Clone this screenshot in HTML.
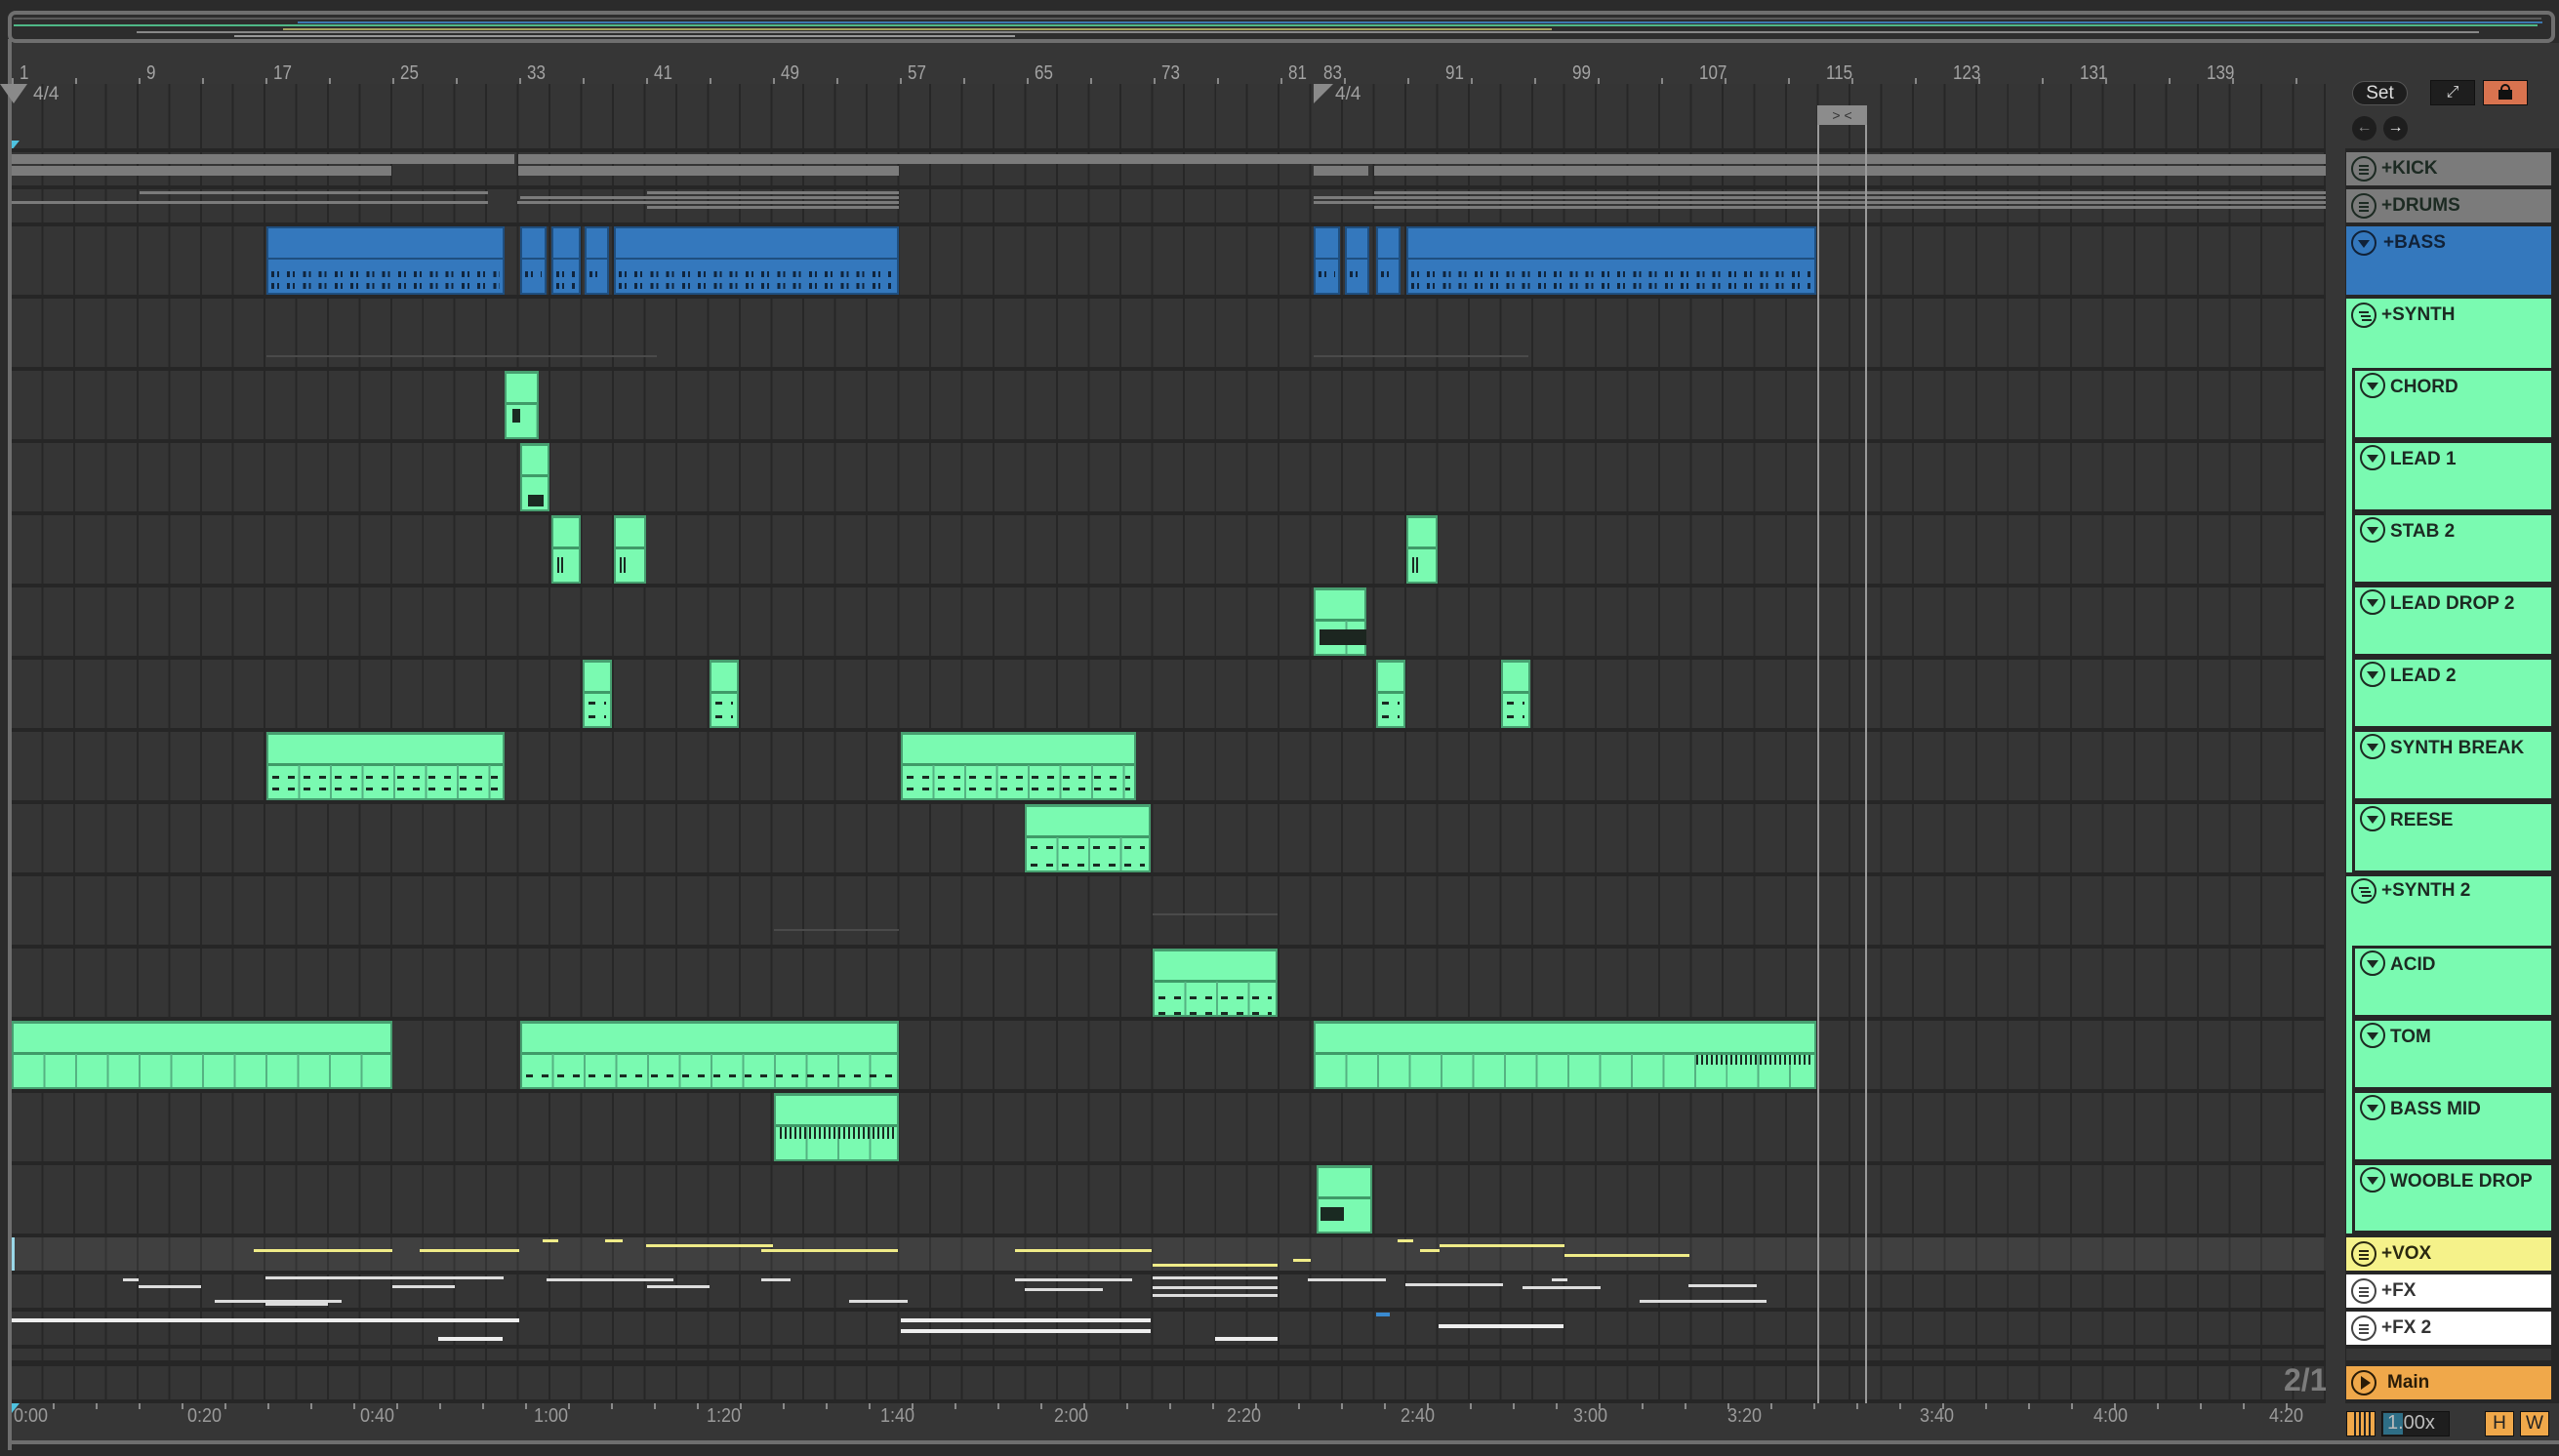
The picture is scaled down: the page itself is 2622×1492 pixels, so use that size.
<!DOCTYPE html>
<html><head><meta charset="utf-8"><style>
*{margin:0;padding:0;box-sizing:border-box}
body{width:2622px;height:1492px;background:#2b2b2b;position:relative;overflow:hidden;font-family:"Liberation Sans",sans-serif}
.a{position:absolute}
.grid{position:absolute;left:12px;width:2371px;background-color:#353535;background-image:repeating-linear-gradient(90deg,transparent 0 30.5px,#272727 30.5px 32.48px)}
.sep{position:absolute;left:12px;width:2371px;background:#262626}
.g{position:absolute;background:#7afab1;border:2px solid #479f70;border-top-width:3px}
.g .h{position:absolute;left:0;right:0;top:44%;height:3px;background:#3f9a68}
.g .v{position:absolute;left:0;right:0;top:47%;bottom:0;background-image:repeating-linear-gradient(90deg,transparent 0 30.5px,#55b282 30.5px 32.48px)}
.g .n{position:absolute;left:4px;right:4px;height:3px;background-image:repeating-linear-gradient(90deg,#1a2a22 0 7px,transparent 7px 16px)}
.b{position:absolute;background:#3478bd;border:2px solid #1f4f80}
.b .h{position:absolute;left:0;right:0;top:46%;height:2px;background:#1f4f80}
.b .n{position:absolute;left:3px;right:3px;height:6px;background-image:repeating-linear-gradient(90deg,#10253d 0 3px,transparent 3px 6px,#10253d 6px 8px,transparent 8px 16.24px)}
.gr{position:absolute;background:#7b7b7b;height:10px}
.ln{position:absolute;height:3px}
.lab{position:absolute;left:2404px;width:210px;font-weight:bold;font-size:19px;color:#1c2a22}
.ic{position:absolute;width:26px;height:26px;border:2px solid #1c2a22;border-radius:50%}
.ic i{position:absolute;left:6px;width:10px;height:2px;background:#1c2a22}
.ic .t{position:absolute;left:5px;top:8px;width:0;height:0;border-left:6px solid transparent;border-right:6px solid transparent;border-top:8px solid #1c2a22}
.txt{position:absolute;top:6px}
.ch{position:absolute;left:2410px;width:204px;height:74px;border:3px solid #262626;background:#7afab1;border-right:none}
.rn{position:absolute;top:64px;font-size:20px;color:#a3a3a3;transform:scaleX(.85);transform-origin:left}
.tk{position:absolute;width:2px;background:#8a8a8a}
.tn{position:absolute;top:1440px;font-size:20px;color:#9a9a9a;transform:scaleX(.9);transform-origin:left}
</style></head><body>

<!-- overview -->
<div class="a" style="left:8px;top:11px;width:2610px;height:33px;border:4px solid #6f6f6f;border-radius:8px;background:#2d2d2d"></div>
<div class="a" style="left:14px;top:25px;width:1250px;height:2px;background:#4fb887"></div>
<div class="a" style="left:305px;top:22px;width:2300px;height:2px;background:#3c78b0"></div>
<div class="a" style="left:600px;top:25px;width:2000px;height:2px;background:#4fb887"></div>
<div class="a" style="left:290px;top:29px;width:1300px;height:2px;background:#a5a160"></div>
<div class="a" style="left:140px;top:32px;width:2400px;height:2px;background:#888"></div>
<div class="a" style="left:240px;top:36px;width:800px;height:2px;background:#999"></div>
<div class="a" style="left:14px;top:18px;width:2590px;height:2px;background:#5a5a5a"></div>

<!-- left border line -->
<div class="a" style="left:8px;top:40px;width:4px;height:1446px;background:#6e6e6e"></div>
<div class="a" style="left:8px;top:1476px;width:2614px;height:4px;background:#6e6e6e;border-radius:0 0 0 6px"></div>

<!-- ruler -->
<div class="a" style="left:12px;top:44px;width:2391px;height:42px;background:#363636"></div>
<div class="rn" style="left:20px">1</div><div class="rn" style="left:150px">9</div><div class="rn" style="left:280px">17</div><div class="rn" style="left:410px">25</div><div class="rn" style="left:540px">33</div><div class="rn" style="left:670px">41</div><div class="rn" style="left:800px">49</div><div class="rn" style="left:930px">57</div><div class="rn" style="left:1060px">65</div><div class="rn" style="left:1190px">73</div><div class="rn" style="left:1320px">81</div><div class="rn" style="left:1356px">83</div><div class="rn" style="left:1481px">91</div><div class="rn" style="left:1611px">99</div><div class="rn" style="left:1741px">107</div><div class="rn" style="left:1871px">115</div><div class="rn" style="left:2001px">123</div><div class="rn" style="left:2131px">131</div><div class="rn" style="left:2261px">139</div>
<div class="a" style="left:12px;top:80px;width:2371px;height:6px;background-image:repeating-linear-gradient(90deg,#888 0 2px,transparent 2px 65px)"></div>

<!-- grid -->
<div class="grid" style="top:86px;height:1348px"></div>
<div class="a" style="left:14px;top:86px;width:0;height:0;border-left:14px solid transparent;border-right:14px solid transparent;border-top:20px solid #8a8a8a;transform:translateX(-14px)"></div>
<div class="a" style="left:34px;top:86px;font-size:19px;color:#a0a0a0">4/4</div>
<div class="a" style="left:1346px;top:86px;width:0;height:0;border-right:20px solid transparent;border-top:20px solid #8a8a8a"></div>
<div class="a" style="left:1368px;top:86px;font-size:19px;color:#a0a0a0">4/4</div>
<div class="a" style="left:12px;top:144px;width:0;height:0;border-right:8px solid transparent;border-top:10px solid #4fc3e0"></div>

<!-- separators -->
<div class="sep" style="top:152px;height:4px"></div>
<div class="sep" style="top:190px;height:4px"></div>
<div class="sep" style="top:228px;height:4px"></div>
<div class="sep" style="top:302px;height:4px"></div>
<div class="sep" style="top:376px;height:4px"></div><div class="sep" style="top:450px;height:4px"></div><div class="sep" style="top:524px;height:4px"></div><div class="sep" style="top:598px;height:4px"></div><div class="sep" style="top:672px;height:4px"></div><div class="sep" style="top:746px;height:4px"></div><div class="sep" style="top:820px;height:4px"></div><div class="sep" style="top:894px;height:4px"></div><div class="sep" style="top:968px;height:4px"></div><div class="sep" style="top:1042px;height:4px"></div><div class="sep" style="top:1116px;height:4px"></div><div class="sep" style="top:1190px;height:4px"></div>
<div class="sep" style="top:1264px;height:4px"></div>
<div class="a" style="left:12px;top:1268px;width:2371px;height:34px;background:rgba(255,255,255,.06)"></div>
<div class="a" style="left:12px;top:1268px;width:3px;height:34px;background:#9ad8e8"></div>
<div class="sep" style="top:1302px;height:4px"></div>
<div class="sep" style="top:1340px;height:4px"></div>
<div class="sep" style="top:1378px;height:4px"></div>
<div class="sep" style="top:1394px;height:6px"></div>
<div class="sep" style="top:1434px;height:4px"></div>

<!-- KICK -->
<div class="gr" style="left:12px;top:158px;width:515px"></div>
<div class="gr" style="left:531px;top:158px;width:1852px"></div>
<div class="gr" style="left:12px;top:170px;width:389px"></div>
<div class="gr" style="left:531px;top:170px;width:390px"></div>
<div class="gr" style="left:1346px;top:170px;width:56px"></div>
<div class="gr" style="left:1408px;top:170px;width:975px"></div>
<!-- DRUMS -->
<div class="ln" style="left:143px;top:196px;width:357px;background:#7b7b7b"></div>
<div class="ln" style="left:12px;top:206px;width:488px;background:#7b7b7b"></div>
<div class="ln" style="left:663px;top:196px;width:258px;background:#7b7b7b"></div>
<div class="ln" style="left:533px;top:201px;width:388px;background:#7b7b7b"></div>
<div class="ln" style="left:530px;top:206px;width:391px;background:#7b7b7b"></div>
<div class="ln" style="left:663px;top:211px;width:258px;background:#7b7b7b"></div>
<div class="ln" style="left:1346px;top:201px;width:1037px;background:#7b7b7b"></div>
<div class="ln" style="left:1346px;top:206px;width:1037px;background:#7b7b7b"></div>
<div class="ln" style="left:1408px;top:196px;width:975px;background:#7b7b7b"></div>
<div class="ln" style="left:1408px;top:211px;width:975px;background:#7b7b7b"></div>

<!-- BASS -->
<div class="b" style="left:273px;top:232px;width:244px;height:70px"><div class="h"></div><div class="n" style="top:44px"></div><div class="n" style="top:56px"></div></div>
<div class="b" style="left:533px;top:232px;width:27px;height:70px"><div class="h"></div><div class="n" style="top:44px"></div></div>
<div class="b" style="left:565px;top:232px;width:30px;height:70px"><div class="h"></div><div class="n" style="top:44px"></div><div class="n" style="top:56px"></div></div>
<div class="b" style="left:599px;top:232px;width:25px;height:70px"><div class="h"></div><div class="n" style="top:44px"></div></div>
<div class="b" style="left:629px;top:232px;width:292px;height:70px"><div class="h"></div><div class="n" style="top:44px"></div><div class="n" style="top:56px"></div></div>
<div class="b" style="left:1346px;top:232px;width:27px;height:70px"><div class="h"></div><div class="n" style="top:44px"></div></div>
<div class="b" style="left:1378px;top:232px;width:25px;height:70px"><div class="h"></div><div class="n" style="top:44px"></div></div>
<div class="b" style="left:1410px;top:232px;width:25px;height:70px"><div class="h"></div><div class="n" style="top:44px"></div></div>
<div class="b" style="left:1441px;top:232px;width:420px;height:70px"><div class="h"></div><div class="n" style="top:44px"></div><div class="n" style="top:56px"></div></div>

<!-- green clips -->
<div class="g" style="left:517px;top:380px;width:35px;height:70px"><div class="h"></div><div class="v"></div><div class="a" style="left:6px;top:36px;width:8px;height:14px;background:#1a2a22"></div></div>
<div class="g" style="left:533px;top:454px;width:30px;height:70px"><div class="h"></div><div class="a" style="left:6px;top:50px;width:16px;height:12px;background:#1a2a22"></div></div>
<div class="g" style="left:565px;top:528px;width:30px;height:70px"><div class="h"></div><div class="a" style="left:4px;top:40px;width:8px;height:16px;background:repeating-linear-gradient(90deg,#1a2a22 0 2px,transparent 2px 4px)"></div></div>
<div class="g" style="left:629px;top:528px;width:33px;height:70px"><div class="h"></div><div class="a" style="left:4px;top:40px;width:8px;height:16px;background:repeating-linear-gradient(90deg,#1a2a22 0 2px,transparent 2px 4px)"></div></div>
<div class="g" style="left:1441px;top:528px;width:32px;height:70px"><div class="h"></div><div class="a" style="left:4px;top:40px;width:8px;height:16px;background:repeating-linear-gradient(90deg,#1a2a22 0 2px,transparent 2px 4px)"></div></div>
<div class="g" style="left:1346px;top:602px;width:54px;height:70px"><div class="h"></div><div class="v"></div><div class="a" style="left:4px;top:40px;width:48px;height:16px;background:#1c2620"></div></div>
<div class="g" style="left:597px;top:676px;width:30px;height:70px"><div class="h"></div><div class="n" style="top:40px"></div><div class="n" style="top:54px"></div></div>
<div class="g" style="left:727px;top:676px;width:30px;height:70px"><div class="h"></div><div class="n" style="top:40px"></div><div class="n" style="top:54px"></div></div>
<div class="g" style="left:1410px;top:676px;width:30px;height:70px"><div class="h"></div><div class="n" style="top:40px"></div><div class="n" style="top:54px"></div></div>
<div class="g" style="left:1538px;top:676px;width:30px;height:70px"><div class="h"></div><div class="n" style="top:40px"></div><div class="n" style="top:54px"></div></div>
<div class="g" style="left:273px;top:750px;width:244px;height:70px"><div class="h"></div><div class="v"></div><div class="n" style="top:42px"></div><div class="n" style="top:54px"></div></div>
<div class="g" style="left:923px;top:750px;width:241px;height:70px"><div class="h"></div><div class="v"></div><div class="n" style="top:42px"></div><div class="n" style="top:54px"></div></div>
<div class="g" style="left:1050px;top:824px;width:129px;height:70px"><div class="h"></div><div class="v"></div><div class="n" style="top:40px"></div><div class="n" style="top:58px"></div></div>
<div class="g" style="left:1181px;top:972px;width:128px;height:70px"><div class="h"></div><div class="v"></div><div class="n" style="top:46px"></div><div class="n" style="top:62px"></div></div>
<div class="g" style="left:12px;top:1046px;width:390px;height:70px"><div class="h"></div><div class="v"></div></div>
<div class="g" style="left:533px;top:1046px;width:388px;height:70px"><div class="h"></div><div class="v"></div><div class="n" style="top:52px"></div></div>
<div class="g" style="left:1346px;top:1046px;width:515px;height:70px"><div class="h"></div><div class="v"></div><div class="a" style="left:390px;top:32px;width:120px;height:10px;background:repeating-linear-gradient(90deg,#1a2a22 0 2px,transparent 2px 5px)"></div></div>
<div class="g" style="left:793px;top:1120px;width:128px;height:70px"><div class="h"></div><div class="v"></div><div class="a" style="left:4px;top:32px;width:118px;height:12px;background:repeating-linear-gradient(90deg,#1a2a22 0 2px,transparent 2px 5px)"></div></div>
<div class="g" style="left:1349px;top:1194px;width:57px;height:70px"><div class="h"></div><div class="a" style="left:2px;top:40px;width:24px;height:14px;background:#1a2a22"></div></div>

<!-- thin lines SYNTH / SYNTH2 -->
<div class="ln" style="left:273px;top:364px;width:400px;height:2px;background:#4a4a4a"></div>
<div class="ln" style="left:1346px;top:364px;width:220px;height:2px;background:#4a4a4a"></div>
<div class="ln" style="left:1181px;top:936px;width:128px;height:2px;background:#4a4a4a"></div>
<div class="ln" style="left:793px;top:952px;width:128px;height:2px;background:#4a4a4a"></div>

<!-- VOX lines -->
<div class="ln" style="left:260px;top:1280px;width:142px;background:#f0ec88"></div>
<div class="ln" style="left:430px;top:1280px;width:102px;background:#f0ec88"></div>
<div class="ln" style="left:556px;top:1270px;width:16px;background:#f0ec88"></div>
<div class="ln" style="left:620px;top:1270px;width:18px;background:#f0ec88"></div>
<div class="ln" style="left:662px;top:1275px;width:130px;background:#f0ec88"></div>
<div class="ln" style="left:780px;top:1280px;width:140px;background:#f0ec88"></div>
<div class="ln" style="left:1040px;top:1280px;width:140px;background:#f0ec88"></div>
<div class="ln" style="left:1181px;top:1295px;width:128px;background:#f0ec88"></div>
<div class="ln" style="left:1325px;top:1290px;width:18px;background:#f0ec88"></div>
<div class="ln" style="left:1432px;top:1270px;width:16px;background:#f0ec88"></div>
<div class="ln" style="left:1455px;top:1280px;width:20px;background:#f0ec88"></div>
<div class="ln" style="left:1475px;top:1275px;width:128px;background:#f0ec88"></div>
<div class="ln" style="left:1603px;top:1285px;width:128px;background:#f0ec88"></div>
<!-- FX lines -->
<div class="ln" style="left:126px;top:1310px;width:16px;background:#ddd"></div>
<div class="ln" style="left:142px;top:1317px;width:64px;background:#ddd"></div>
<div class="ln" style="left:272px;top:1308px;width:244px;background:#ddd"></div>
<div class="ln" style="left:402px;top:1317px;width:64px;background:#ddd"></div>
<div class="ln" style="left:220px;top:1332px;width:130px;background:#ddd"></div>
<div class="ln" style="left:272px;top:1335px;width:64px;background:#ddd"></div>
<div class="ln" style="left:560px;top:1310px;width:130px;background:#ddd"></div>
<div class="ln" style="left:663px;top:1317px;width:64px;background:#ddd"></div>
<div class="ln" style="left:780px;top:1310px;width:30px;background:#ddd"></div>
<div class="ln" style="left:870px;top:1332px;width:60px;background:#ddd"></div>
<div class="ln" style="left:1040px;top:1310px;width:120px;background:#ddd"></div>
<div class="ln" style="left:1050px;top:1320px;width:80px;background:#ddd"></div>
<div class="ln" style="left:1181px;top:1308px;width:128px;background:#ddd"></div>
<div class="ln" style="left:1181px;top:1318px;width:128px;background:#ddd"></div>
<div class="ln" style="left:1181px;top:1326px;width:128px;background:#ddd"></div>
<div class="ln" style="left:1340px;top:1310px;width:80px;background:#ddd"></div>
<div class="ln" style="left:1440px;top:1315px;width:100px;background:#ddd"></div>
<div class="ln" style="left:1560px;top:1318px;width:80px;background:#ddd"></div>
<div class="ln" style="left:1680px;top:1332px;width:130px;background:#ddd"></div>
<div class="ln" style="left:1730px;top:1316px;width:70px;background:#ddd"></div>
<div class="ln" style="left:1590px;top:1310px;width:16px;background:#ddd"></div>
<!-- FX2 lines -->
<div class="ln" style="left:12px;top:1351px;width:520px;height:4px;background:#eee"></div>
<div class="ln" style="left:449px;top:1370px;width:66px;height:4px;background:#eee"></div>
<div class="ln" style="left:923px;top:1351px;width:256px;height:4px;background:#eee"></div>
<div class="ln" style="left:923px;top:1362px;width:256px;height:4px;background:#eee"></div>
<div class="ln" style="left:1245px;top:1370px;width:64px;height:4px;background:#eee"></div>
<div class="ln" style="left:1410px;top:1345px;width:14px;height:4px;background:#3a8ad0"></div>
<div class="ln" style="left:1474px;top:1357px;width:128px;height:4px;background:#eee"></div>

<!-- loop markers -->
<div class="a" style="left:1862px;top:108px;width:2px;height:1330px;background:#9a9a9a"></div>
<div class="a" style="left:1911px;top:108px;width:2px;height:1330px;background:#9a9a9a"></div>
<div class="a" style="left:1862px;top:108px;width:51px;height:20px;background:#8c8c8c;color:#333;font-size:14px;line-height:20px;text-align:center">&gt; &lt;</div>

<div class="a" style="left:2340px;top:1396px;font-size:32px;font-weight:bold;color:#7c7c7c">2/1</div>

<!-- bottom time ruler -->
<div class="a" style="left:12px;top:1438px;width:2391px;height:38px;background:#363636"></div>
<div class="a" style="left:12px;top:1438px;width:2371px;height:6px;background-image:repeating-linear-gradient(90deg,transparent 0 42px,#8a8a8a 42px 44px)"></div>
<div class="tn" style="left:14px">0:00</div><div class="tn" style="left:192px">0:20</div><div class="tn" style="left:369px">0:40</div><div class="tn" style="left:547px">1:00</div><div class="tn" style="left:724px">1:20</div><div class="tn" style="left:902px">1:40</div><div class="tn" style="left:1080px">2:00</div><div class="tn" style="left:1257px">2:20</div><div class="tn" style="left:1435px">2:40</div><div class="tn" style="left:1612px">3:00</div><div class="tn" style="left:1770px">3:20</div><div class="tn" style="left:1967px">3:40</div><div class="tn" style="left:2145px">4:00</div><div class="tn" style="left:2325px">4:20</div>
<div class="a" style="left:12px;top:1438px;width:0;height:0;border-right:8px solid transparent;border-top:10px solid #4fc3e0"></div>

<!-- right panel -->
<div class="a" style="left:2383px;top:44px;width:239px;height:1432px;background:#363636"></div>
<div class="a" style="left:2403px;top:152px;width:219px;height:1286px;background:#262626"></div>
<div class="a" style="left:2410px;top:83px;width:57px;height:25px;border-radius:13px;background:#1e1e1e;border:1px solid #555;color:#ddd;font-size:19px;text-align:center;line-height:23px">Set</div>
<div class="a" style="left:2490px;top:82px;width:46px;height:26px;background:#1e1e1e;border:1px solid #111;color:#ddd;font-size:16px;text-align:center;line-height:24px">⤢</div>
<div class="a" style="left:2544px;top:82px;width:46px;height:26px;background:#d9734f;border:1px solid #111"><div class="a" style="left:15px;top:9px;width:14px;height:10px;background:#111"></div><div class="a" style="left:17px;top:3px;width:10px;height:9px;border:2px solid #111;border-bottom:none;border-radius:5px 5px 0 0"></div></div>
<div class="a" style="left:2410px;top:119px;width:25px;height:25px;border-radius:50%;background:#1e1e1e;color:#888;font-size:16px;text-align:center;line-height:24px">←</div>
<div class="a" style="left:2442px;top:119px;width:25px;height:25px;border-radius:50%;background:#1e1e1e;color:#eee;font-size:16px;text-align:center;line-height:24px">→</div>

<div class="lab" style="top:156px;height:34px;background:#7b7b7b"><div class="ic" style="left:5px;top:4px"><i style="top:7px"></i><i style="top:11px"></i><i style="top:15px"></i></div><span class="txt" style="left:36px">+KICK</span></div>
<div class="lab" style="top:194px;height:34px;background:#7b7b7b"><div class="ic" style="left:5px;top:4px"><i style="top:7px"></i><i style="top:11px"></i><i style="top:15px"></i></div><span class="txt" style="left:36px">+DRUMS</span></div>
<div class="lab" style="top:232px;height:70px;background:#3478bd;color:#112238"><div class="ic" style="left:5px;top:4px;border-color:#112238"><div class="t" style="border-top-color:#112238"></div></div><span class="txt" style="left:38px">+BASS</span></div>
<div class="lab" style="top:306px;height:958px;background:#7afab1"><div class="ic" style="left:5px;top:4px"><i style="top:7px"></i><i style="top:11px;left:8px"></i><i style="top:15px;left:9px"></i></div><span class="txt" style="left:36px">+SYNTH</span></div>
<div class="ch" style="top:377px"></div>
<div class="ch" style="top:451px"></div>
<div class="ch" style="top:525px"></div>
<div class="ch" style="top:599px"></div>
<div class="ch" style="top:673px"></div>
<div class="ch" style="top:747px"></div>
<div class="ch" style="top:821px"></div>
<div class="a" style="left:2404px;top:894px;width:210px;height:4px;background:#262626"></div>
<div class="lab" style="top:898px;height:70px;background:#7afab1"><div class="ic" style="left:5px;top:2px"><i style="top:7px"></i><i style="top:11px;left:8px"></i><i style="top:15px;left:9px"></i></div><span class="txt" style="left:36px;top:4px">+SYNTH 2</span></div>
<div class="ch" style="top:969px"></div>
<div class="ch" style="top:1043px"></div>
<div class="ch" style="top:1117px"></div>
<div class="ch" style="top:1191px;height:73px"></div>

<div class="lab" style="top:379px;left:2413px;width:200px;height:30px;background:none"><div class="ic" style="left:5px;top:3px"><div class="t"></div></div><span class="txt" style="left:36px;top:7px">CHORD</span></div>
<div class="lab" style="top:453px;left:2413px;width:200px;height:30px"><div class="ic" style="left:5px;top:3px"><div class="t"></div></div><span class="txt" style="left:36px;top:7px">LEAD 1</span></div>
<div class="lab" style="top:527px;left:2413px;width:200px;height:30px"><div class="ic" style="left:5px;top:3px"><div class="t"></div></div><span class="txt" style="left:36px;top:7px">STAB 2</span></div>
<div class="lab" style="top:601px;left:2413px;width:200px;height:30px"><div class="ic" style="left:5px;top:3px"><div class="t"></div></div><span class="txt" style="left:36px;top:7px">LEAD DROP 2</span></div>
<div class="lab" style="top:675px;left:2413px;width:200px;height:30px"><div class="ic" style="left:5px;top:3px"><div class="t"></div></div><span class="txt" style="left:36px;top:7px">LEAD 2</span></div>
<div class="lab" style="top:749px;left:2413px;width:200px;height:30px"><div class="ic" style="left:5px;top:3px"><div class="t"></div></div><span class="txt" style="left:36px;top:7px">SYNTH BREAK</span></div>
<div class="lab" style="top:823px;left:2413px;width:200px;height:30px"><div class="ic" style="left:5px;top:3px"><div class="t"></div></div><span class="txt" style="left:36px;top:7px">REESE</span></div>
<div class="lab" style="top:971px;left:2413px;width:200px;height:30px"><div class="ic" style="left:5px;top:3px"><div class="t"></div></div><span class="txt" style="left:36px;top:7px">ACID</span></div>
<div class="lab" style="top:1045px;left:2413px;width:200px;height:30px"><div class="ic" style="left:5px;top:3px"><div class="t"></div></div><span class="txt" style="left:36px;top:7px">TOM</span></div>
<div class="lab" style="top:1119px;left:2413px;width:200px;height:30px"><div class="ic" style="left:5px;top:3px"><div class="t"></div></div><span class="txt" style="left:36px;top:7px">BASS MID</span></div>
<div class="lab" style="top:1193px;left:2413px;width:200px;height:30px"><div class="ic" style="left:5px;top:3px"><div class="t"></div></div><span class="txt" style="left:36px;top:7px">WOOBLE DROP</span></div>

<div class="lab" style="top:1268px;height:34px;background:#f5f28a;color:#2a2810"><div class="ic" style="left:5px;top:4px;border-color:#2a2810"><i style="top:7px;background:#2a2810"></i><i style="top:11px;background:#2a2810"></i><i style="top:15px;background:#2a2810"></i></div><span class="txt" style="left:36px">+VOX</span></div>
<div class="lab" style="top:1306px;height:34px;background:#fff;color:#333"><div class="ic" style="left:5px;top:4px;border-color:#444"><i style="top:7px;background:#444"></i><i style="top:11px;background:#444"></i><i style="top:15px;background:#444"></i></div><span class="txt" style="left:36px">+FX</span></div>
<div class="lab" style="top:1344px;height:34px;background:#fff;color:#333"><div class="ic" style="left:5px;top:4px;border-color:#444"><i style="top:7px;background:#444"></i><i style="top:11px;background:#444"></i><i style="top:15px;background:#444"></i></div><span class="txt" style="left:36px">+FX 2</span></div>
<div class="a" style="left:2404px;top:1382px;width:210px;height:12px;background:#363636"></div>
<div class="lab" style="top:1400px;height:34px;background:#f0a84a;color:#2a1c08"><div class="ic" style="left:5px;top:4px;border-color:#2a1c08"><div class="a" style="left:8px;top:4px;width:0;height:0;border-top:7px solid transparent;border-bottom:7px solid transparent;border-left:10px solid #2a1c08"></div></div><span class="txt" style="left:42px">Main</span></div>

<div class="a" style="left:2404px;top:1446px;width:30px;height:26px;background:#f0a84a;border:1px solid #111;background-image:linear-gradient(90deg,transparent 7px,#222 7px 9px,transparent 9px 12px,#222 12px 14px,transparent 14px 17px,#222 17px 19px,transparent 19px 22px,#222 22px 24px,transparent 24px)"></div>
<div class="a" style="left:2440px;top:1446px;width:70px;height:26px;background:#1e1e1e;border:1px solid #111"></div>
<div class="a" style="left:2442px;top:1448px;width:20px;height:22px;background:#2e6e86"></div>
<div class="a" style="left:2446px;top:1447px;font-size:20px;color:#bbb">1.00x</div>
<div class="a" style="left:2546px;top:1446px;width:30px;height:26px;background:#f0a84a;border:1px solid #111;font-size:19px;text-align:center;line-height:24px;color:#222">H</div>
<div class="a" style="left:2582px;top:1446px;width:30px;height:26px;background:#f0a84a;border:1px solid #111;font-size:19px;text-align:center;line-height:24px;color:#222">W</div>
</body></html>
